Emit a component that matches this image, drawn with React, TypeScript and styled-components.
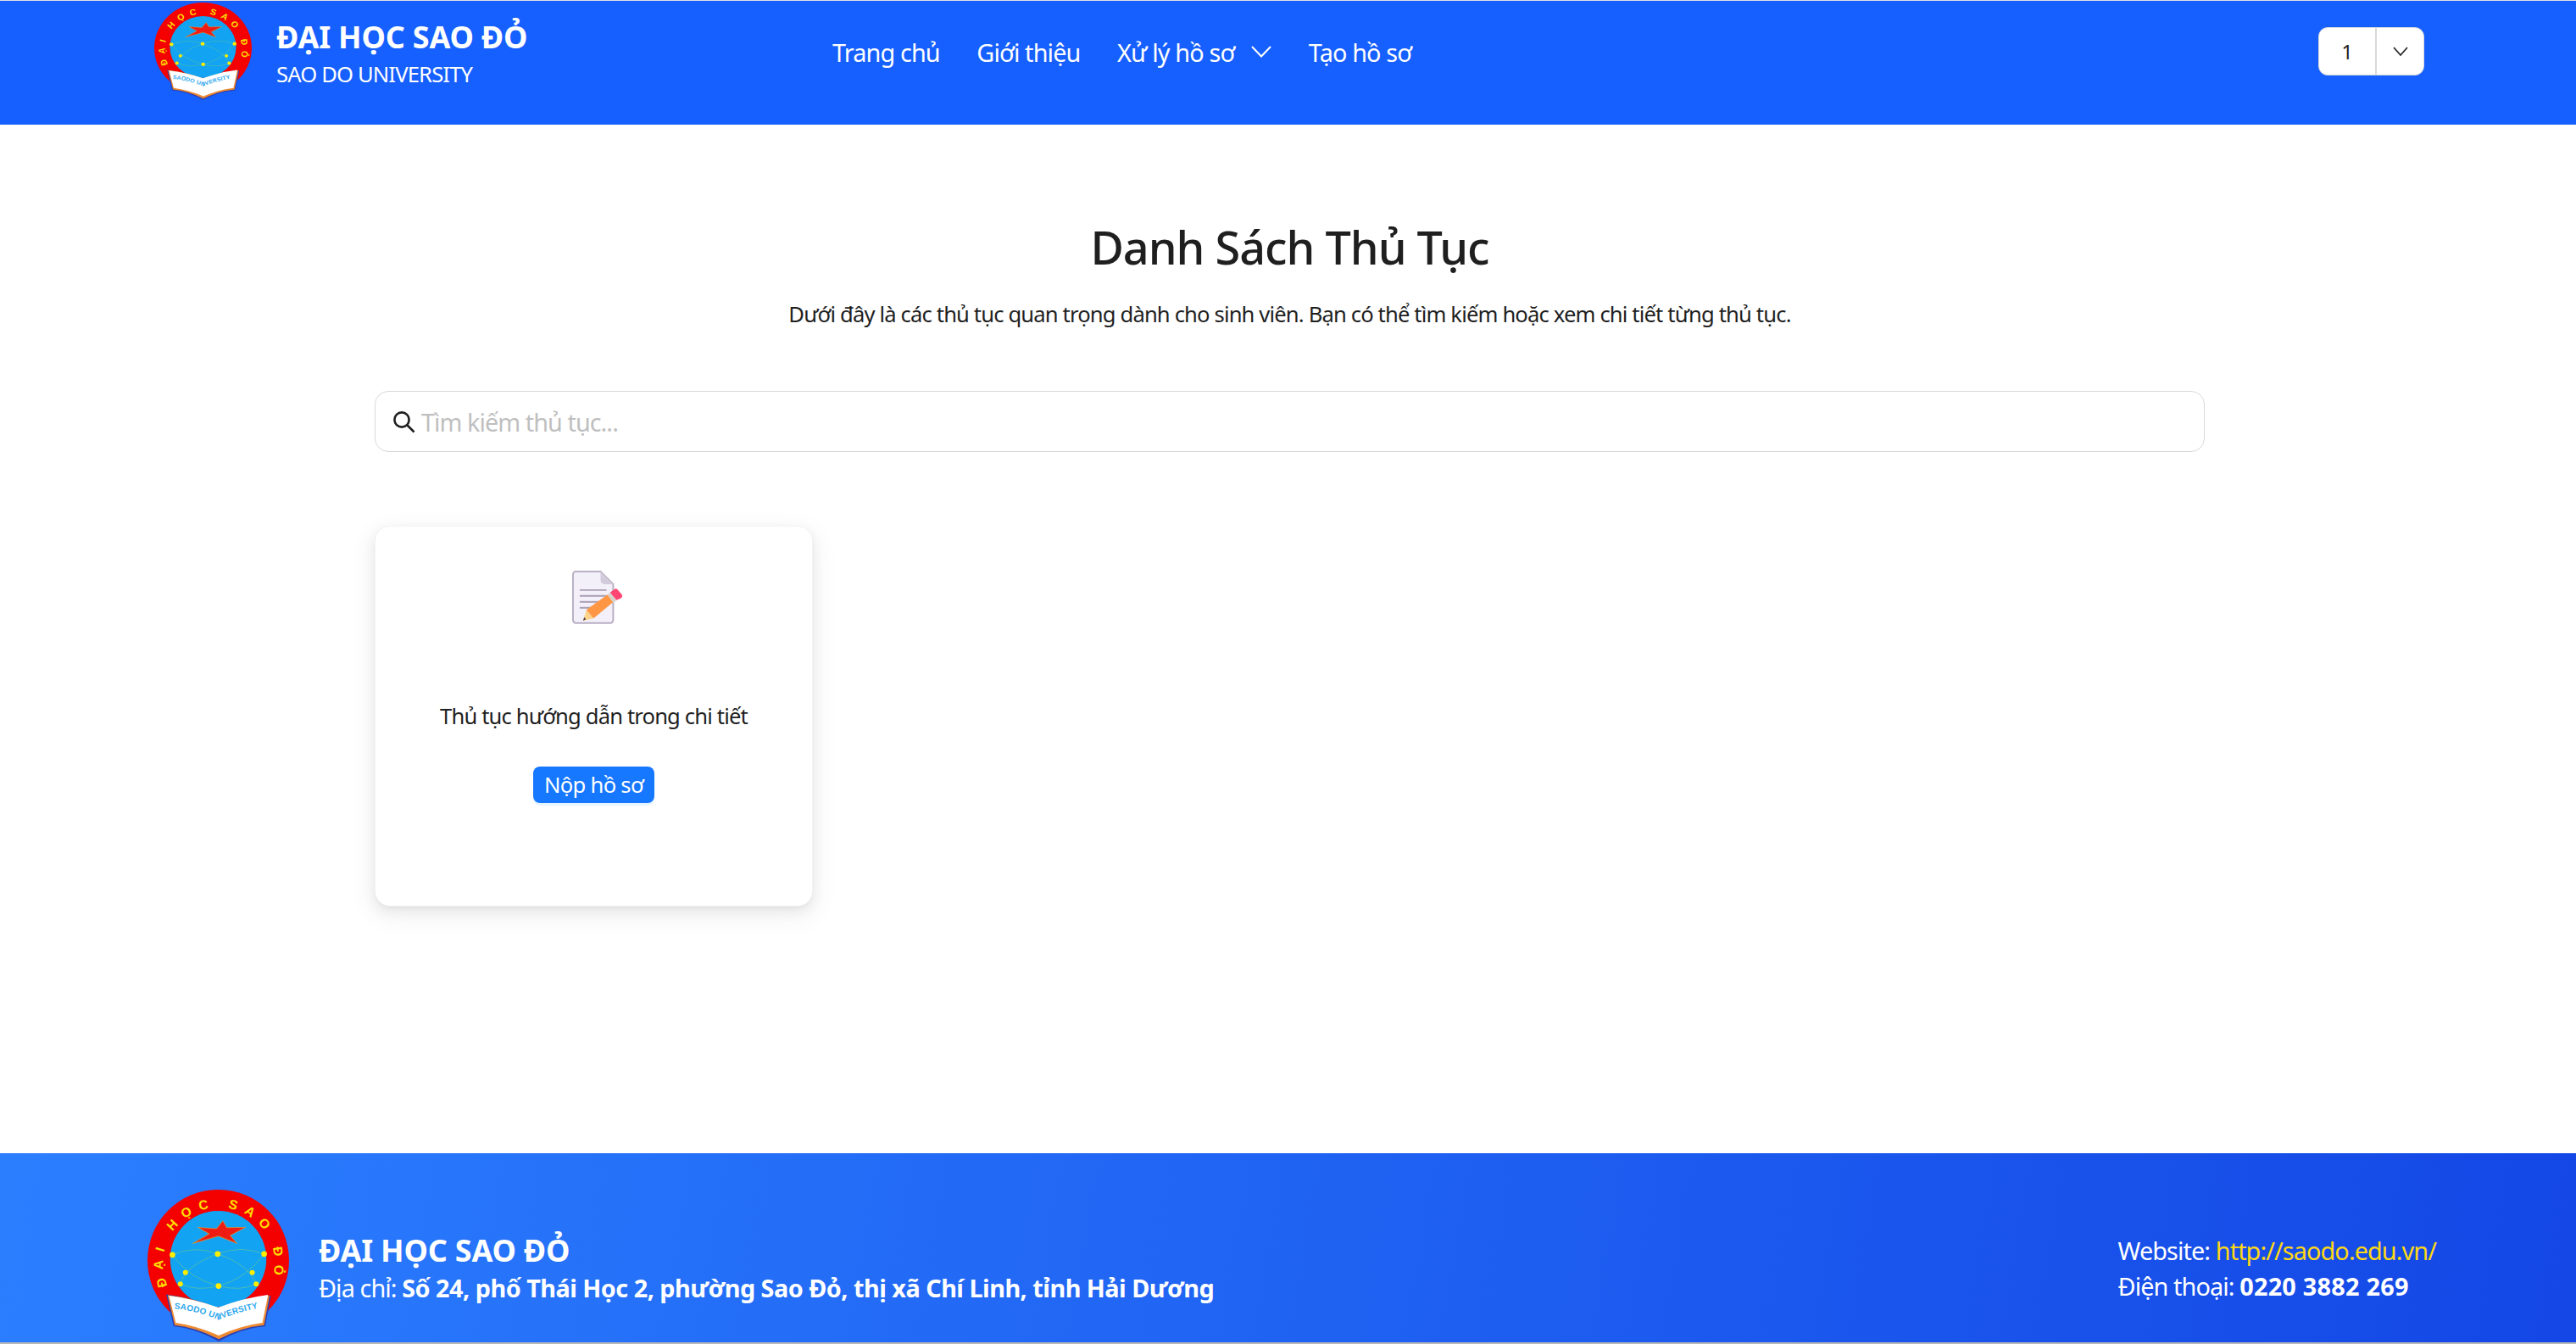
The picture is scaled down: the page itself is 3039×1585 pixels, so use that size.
import React from "react";
import styled, { createGlobalStyle } from "styled-components";

const Global = createGlobalStyle`
  html, body { margin: 0; padding: 0; background: #fff; }
  body { font-family: "Noto Sans", "Open Sans", sans-serif; color: #1f1f1f; }
  * { box-sizing: border-box; }
`;

const Page = styled.div`
  height: 1585px;
  display: flex;
  flex-direction: column;
  border-top: 1px solid #e2e2e2;
  border-bottom: 2px solid #b9b9b9;
  overflow: hidden;
`;

const Header = styled.header`
  height: 146px;
  flex: none;
  background: #1660ff;
  display: flex;
  align-items: flex-start;
  padding: 0 179px 0 182px;
  color: #fff;
`;

const Brand = styled.div`
  flex: 0 0 800px;
  display: flex;
  gap: 29px;
  padding-top: 2px;
`;

const BrandText = styled.div`
  display: flex;
  flex-direction: column;
  padding-top: 18px;
`;

const BrandTitle = styled.div`
  font-size: 36px;
  font-weight: 700;
  line-height: 46px;
  letter-spacing: -0.2px;
  white-space: nowrap;
`;

const BrandSub = styled.div`
  font-size: 25.6px;
  line-height: 36px;
  letter-spacing: -0.85px;
  margin-top: 3px;
  white-space: nowrap;
`;

const Nav = styled.nav`
  display: flex;
  align-items: center;
  gap: 43.5px;
  height: 120px;
  font-size: 28.8px;
  letter-spacing: -0.85px;
  white-space: nowrap;
`;

const NavItem = styled.span`
  display: inline-flex;
  align-items: center;
  gap: 20px;
`;

const Select = styled.div`
  margin-left: auto;
  margin-top: 31px;
  width: 125px;
  height: 57px;
  display: flex;
  background: #fff;
  border: 1px solid #d9d9d9;
  border-radius: 11px;
  color: #1f1f1f;
  font-size: 24px;
`;

const SelectValue = styled.div`
  width: 68px;
  display: flex;
  align-items: center;
  justify-content: center;
  border-right: 2px solid #d9d9d9;
`;

const SelectArrow = styled.div`
  flex: 1;
  display: flex;
  align-items: center;
  justify-content: center;
`;

const Main = styled.main`
  flex: 1;
  padding: 110px 438px 0 442px;
  display: flex;
  flex-direction: column;
`;

const Title = styled.h1`
  margin: 0;
  font-size: 54px;
  line-height: 68px;
  font-weight: 500;
  text-align: center;
  letter-spacing: -1px;
`;

const Subtitle = styled.p`
  margin: 26px 0 0;
  font-size: 25.6px;
  line-height: 40px;
  text-align: center;
  letter-spacing: -0.85px;
`;

const Search = styled.div`
  margin-top: 70px;
  height: 72px;
  border: 1px solid #d9d9d9;
  border-radius: 16px;
  display: flex;
  align-items: center;
  gap: 7px;
  padding-left: 20px;
  font-size: 28.8px;
  letter-spacing: -0.95px;
  color: #bfbfbf;
`;

const Grid = styled.section`
  margin-top: 87px;
  display: grid;
  grid-template-columns: repeat(4, 517px);
  gap: 30px;
`;

const Card = styled.article`
  height: 449px;
  background: #fff;
  border: 1px solid #f3f3f3;
  border-radius: 18px;
  box-shadow: 0 6px 16px rgba(0, 0, 0, 0.07), 0 3px 6px -4px rgba(0, 0, 0, 0.1), 0 9px 28px 8px rgba(0, 0, 0, 0.04);
  display: flex;
  flex-direction: column;
  align-items: center;
  padding-top: 50px;
`;

const CardText = styled.div`
  margin-top: 87px;
  font-size: 25.6px;
  line-height: 40px;
  letter-spacing: -0.85px;
  white-space: nowrap;
`;

const Button = styled.button`
  margin-top: 39px;
  width: 143px;
  height: 43px;
  padding: 0;
  border: 0;
  border-radius: 8px;
  background: #1677ff;
  box-shadow: 0 3px 0 rgba(5, 145, 255, 0.1);
  color: #fff;
  font: inherit;
  font-size: 25.6px;
  letter-spacing: -0.7px;
  line-height: 43px;
`;

const Footer = styled.footer`
  height: 223px;
  flex: none;
  background: linear-gradient(100deg, #2b7fff, #1447e6);
  color: #fff;
  display: flex;
  justify-content: space-between;
  align-items: flex-start;
  padding: 43px 165px 0 174px;
`;

const FooterLeft = styled.div`
  display: flex;
  align-items: center;
  gap: 35px;
`;

const FooterText = styled.div`
  padding-top: 6px;
`;

const FooterTitle = styled.div`
  font-size: 36px;
  font-weight: 700;
  line-height: 46px;
  letter-spacing: -0.2px;
`;

const FooterLine = styled.div`
  font-size: 28.8px;
  line-height: 42px;
  letter-spacing: -0.9px;
  white-space: nowrap;
  b { font-weight: 700; letter-spacing: -0.5px; }
`;

const FooterRight = styled.div`
  padding-top: 51px;
  b { letter-spacing: 0.25px; }
`;

const Link = styled.span`
  color: #ffd814;
`;

const Logo = ({ id, width, height }: { id: string; width: number; height: number }) => (
  <svg width={width} height={height} viewBox="72 70 500 536" preserveAspectRatio="none" style={{ flex: "none", display: "block" }}>
    <defs>
      <path id={`${id}-arc`} d="M 144 410 A 197 197 0 1 1 504 410" />
      <path id={`${id}-book`} d="M 166 490 Q 250 498 322 530 Q 400 498 492 482" />
    </defs>
    <circle cx="322" cy="320" r="250" fill="#f40000" />
    <circle cx="322" cy="315" r="170" fill="#12a3f3" />
    <path
      d="M338 180 L352 204 L418 203 L364 232 L388 260 L323 234 L232 260 L290 226 L250 203 L316 208 Z"
      fill="#ef1c14"
      stroke="#f0a020"
      strokeWidth="2"
    />
    <g fill="none" stroke="#55c0a0" strokeWidth="2.5">
      <path d="M160 300 Q240 265 320 297 Q400 265 484 297" />
      <path d="M160 300 Q220 385 323 410 Q420 385 484 297" />
      <path d="M188 403 Q210 335 320 297 Q430 335 456 403" />
      <path d="M188 403 Q250 430 323 410 Q400 430 456 403" />
    </g>
    <g fill="#ffee00">
      <circle cx="160" cy="300" r="10" />
      <circle cx="320" cy="297" r="10" />
      <circle cx="484" cy="297" r="10" />
      <circle cx="206" cy="363" r="9" />
      <circle cx="442" cy="363" r="9" />
      <circle cx="188" cy="403" r="9" />
      <circle cx="323" cy="410" r="10" />
      <circle cx="456" cy="403" r="9" />
    </g>
    <text fill="#ffe100" fontFamily="Liberation Sans, sans-serif" fontWeight="700" fontSize="46" letterSpacing="27">
      <textPath href={`#${id}-arc`}>ĐẠI HỌC SAO ĐỎ</textPath>
    </text>
    <path d="M138 440 Q240 452 322 490 Q410 452 508 444 L488 552 Q400 560 324 606 Q245 560 164 552 Z" fill="#2b3fb0" />
    <path d="M143 442 Q240 454 322 488 Q410 452 503 444 L484 548 Q400 556 324 598 Q245 556 168 548 Z" fill="#ee8a30" />
    <path d="M148 444 Q240 456 322 486 Q410 452 498 441 L478 540 Q400 550 324 585 Q245 550 172 540 Z" fill="#fff" />
    <text fill="#2ea8ee" fontFamily="Liberation Sans, sans-serif" fontWeight="700" fontSize="30" letterSpacing="0.7">
      <textPath href={`#${id}-book`}>SAODO UNIVERSITY</textPath>
    </text>
  </svg>
);

const DocIcon = () => (
  <svg width="63" height="67" viewBox="100 60 190 200" style={{ display: "block", marginLeft: "8px" }}>
    <path d="M119 68 H207 L252 113 V241 a10 10 0 0 1 -10 10 H119 a10 10 0 0 1 -10 -10 V78 a10 10 0 0 1 10 -10 Z" fill="#f3f0fa" stroke="#b9b0c4" strokeWidth="6" />
    <path d="M207 68 L252 113 H222 a15 15 0 0 1 -15 -15 Z" fill="#d2cbdb" />
    <g stroke="#a99eb3" strokeWidth="6">
      <path d="M133 134 H228" />
      <path d="M133 155 H228" />
      <path d="M133 176 H212" />
      <path d="M133 197 H180" />
    </g>
    <path d="M145 243 L157 204 L182 235 Z" fill="#fdd28a" />
    <path d="M145 243 L149 231 L155 238 Z" fill="#4a3a3a" />
    <path d="M157 204 L232 150 L253 176 L182 235 Z" fill="#ff9644" />
    <path d="M232 150 L241 143 L264 170 L253 180 Z" fill="#d6d3cf" />
    <path d="M241 143 L256 131 Q262 127 268 133 L283 150 Q287 156 281 162 L264 170 Z" fill="#ff4673" />
  </svg>
);

const NavChevron = () => (
  <svg width="24" height="14" viewBox="0 0 24 14" fill="none" stroke="#fff" strokeWidth="2">
    <path d="M1 1 L12 12.5 L23 1" />
  </svg>
);

const SelectChevron = () => (
  <svg width="18" height="12" viewBox="0 0 18 12" fill="none" stroke="#222" strokeWidth="1.7">
    <path d="M1 1 L9 10 L17 1" />
  </svg>
);

const SearchIcon = () => (
  <svg width="27" height="27" viewBox="0 0 27 27" fill="none" stroke="#1f1f1f" strokeWidth="2.6" style={{ flex: "none" }}>
    <circle cx="11" cy="11" r="8.6" />
    <path d="M17 17 L25.5 25.5" />
  </svg>
);

export default function App() {
  return (
    <>
      <Global />
      <Page>
        <Header>
          <Brand>
            <Logo id="hdr" width={115} height={115} />
            <BrandText>
              <BrandTitle>ĐẠI HỌC SAO ĐỎ</BrandTitle>
              <BrandSub>SAO DO UNIVERSITY</BrandSub>
            </BrandText>
          </Brand>
          <Nav>
            <NavItem>Trang chủ</NavItem>
            <NavItem>Giới thiệu</NavItem>
            <NavItem>Xử lý hồ sơ <NavChevron /></NavItem>
            <NavItem>Tạo hồ sơ</NavItem>
          </Nav>
          <Select>
            <SelectValue>1</SelectValue>
            <SelectArrow><SelectChevron /></SelectArrow>
          </Select>
        </Header>
        <Main>
          <Title>Danh Sách Thủ Tục</Title>
          <Subtitle>Dưới đây là các thủ tục quan trọng dành cho sinh viên. Bạn có thể tìm kiếm hoặc xem chi tiết từng thủ tục.</Subtitle>
          <Search>
            <SearchIcon />
            Tìm kiếm thủ tục...
          </Search>
          <Grid>
            <Card>
              <DocIcon />
              <CardText>Thủ tục hướng dẫn trong chi tiết</CardText>
              <Button>Nộp hồ sơ</Button>
            </Card>
          </Grid>
        </Main>
        <Footer>
          <FooterLeft>
            <Logo id="ftr" width={167} height={179} />
            <FooterText>
              <FooterTitle>ĐẠI HỌC SAO ĐỎ</FooterTitle>
              <FooterLine>Địa chỉ: <b>Số 24, phố Thái Học 2, phường Sao Đỏ, thị xã Chí Linh, tỉnh Hải Dương</b></FooterLine>
            </FooterText>
          </FooterLeft>
          <FooterRight>
            <FooterLine>Website: <Link>http://saodo.edu.vn/</Link></FooterLine>
            <FooterLine>Điện thoại: <b>0220 3882 269</b></FooterLine>
          </FooterRight>
        </Footer>
      </Page>
    </>
  );
}
